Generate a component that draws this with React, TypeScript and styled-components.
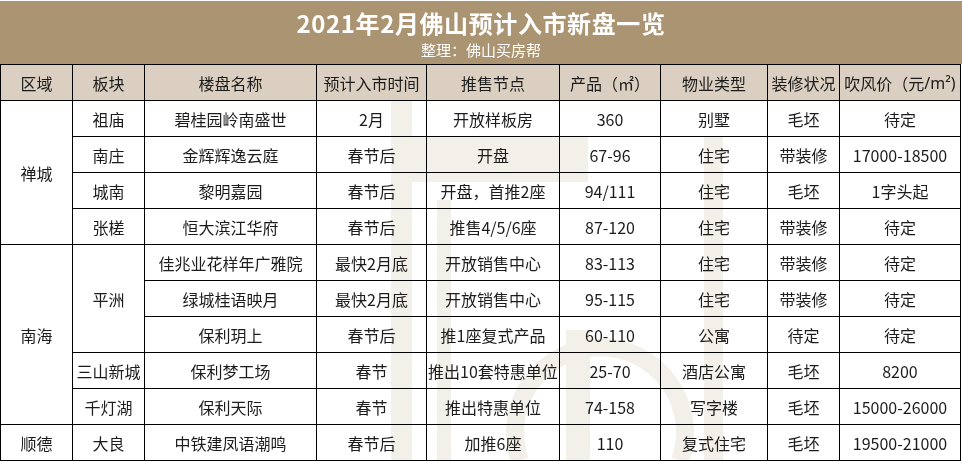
import React from "react";
import styled, { createGlobalStyle } from "styled-components";

const Global = createGlobalStyle`
  html, body { margin: 0; padding: 0; background: #ffffff; }
  body { font-family: "Noto Sans CJK SC", "Noto Sans", sans-serif; }
`;

const Page = styled.div`
  position: relative;
  width: 962px;
  height: 461px;
  overflow: hidden;
  background: #ffffff;
`;

const Banner = styled.header`
  margin-top: 1px;
  height: 63px;
  box-sizing: border-box;
  padding-top: 9px;
  background: #ab9471;
  color: #ffffff;
  display: flex;
  flex-direction: column;
  align-items: center;
`;

const Title = styled.h1`
  margin: 0;
  font-size: 24px;
  line-height: 26px;
  font-weight: 700;
  letter-spacing: 0.6px;
`;

const Subtitle = styled.div`
  margin-top: 5px;
  font-size: 15px;
  line-height: 17px;
`;

const Grid = styled.div`
  display: grid;
  width: 961px;
  box-sizing: border-box;
  padding: 1px;
  gap: 1px;
  background: #000000;
  grid-template-columns: 71px 71px 171px 109px 132px 100px 106px 71px 120px;
  grid-auto-rows: 35px;
`;

const Cell = styled.div<{ $head?: boolean; $span?: number }>`
  background: ${(p) => (p.$head ? "#dacfc0" : "#ffffff")};
  color: #1c1c1c;
  font-size: 16px;
  line-height: 20px;
  white-space: nowrap;
  display: flex;
  align-items: center;
  justify-content: center;
  overflow: hidden;
  grid-row: span ${(p) => p.$span ?? 1};
`;

const Latin = styled.span`
  font-family: "Noto Sans", "Liberation Sans", sans-serif;
`;

const Watermark = styled.svg`
  position: absolute;
  left: 0;
  top: 0;
  pointer-events: none;
  mix-blend-mode: multiply;
`;

const headers: React.ReactNode[] = [
  "区域",
  "板块",
  "楼盘名称",
  "预计入市时间",
  "推售节点",
  "产品（㎡）",
  "物业类型",
  "装修状况",
  <>
    吹风价（元<Latin>/m²)</Latin>
  </>,
];

type Row = {
  area?: [string, number];
  block?: [string, number];
  cells: string[];
};

const rows: Row[] = [
  { area: ["禅城", 4], block: ["祖庙", 1], cells: ["碧桂园岭南盛世", "2月", "开放样板房", "360", "别墅", "毛坯", "待定"] },
  { block: ["南庄", 1], cells: ["金辉辉逸云庭", "春节后", "开盘", "67-96", "住宅", "带装修", "17000-18500"] },
  { block: ["城南", 1], cells: ["黎明嘉园", "春节后", "开盘，首推2座", "94/111", "住宅", "毛坯", "1字头起"] },
  { block: ["张槎", 1], cells: ["恒大滨江华府", "春节后", "推售4/5/6座", "87-120", "住宅", "带装修", "待定"] },
  { area: ["南海", 5], block: ["平洲", 3], cells: ["佳兆业花样年广雅院", "最快2月底", "开放销售中心", "83-113", "住宅", "带装修", "待定"] },
  { cells: ["绿城桂语映月", "最快2月底", "开放销售中心", "95-115", "住宅", "带装修", "待定"] },
  { cells: ["保利玥上", "春节后", "推1座复式产品", "60-110", "公寓", "待定", "待定"] },
  { block: ["三山新城", 1], cells: ["保利梦工场", "春节", "推出10套特惠单位", "25-70", "酒店公寓", "毛坯", "8200"] },
  { block: ["千灯湖", 1], cells: ["保利天际", "春节", "推出特惠单位", "74-158", "写字楼", "毛坯", "15000-26000"] },
  { area: ["顺德", 1], block: ["大良", 1], cells: ["中铁建凤语潮鸣", "春节后", "加推6座", "110", "复式住宅", "毛坯", "19500-21000"] },
];

export default function App() {
  return (
    <>
      <Global />
      <Page>
        <Banner>
          <Title>2021年2月佛山预计入市新盘一览</Title>
          <Subtitle>整理：佛山买房帮</Subtitle>
        </Banner>
        <Grid>
          {headers.map((h, i) => (
            <Cell key={i} $head>
              {h}
            </Cell>
          ))}
          {rows.map((r, i) => (
            <React.Fragment key={i}>
              {r.area && <Cell $span={r.area[1]}>{r.area[0]}</Cell>}
              {r.block && <Cell $span={r.block[1]}>{r.block[0]}</Cell>}
              {r.cells.map((c, j) => (
                <Cell key={j}>{c}</Cell>
              ))}
            </React.Fragment>
          ))}
        </Grid>
        <Watermark width="962" height="461" viewBox="0 0 962 461">
          <g fill="#f3efe9">
            <rect x="391" y="101" width="21" height="360" />
            <rect x="412" y="137" width="176" height="45" />
            <rect x="437" y="200" width="14" height="261" />
            <rect x="704" y="137" width="19" height="324" />
            <rect x="566" y="330" width="24" height="131" />
          </g>
          <g fill="none" stroke="#f3efe9" strokeWidth="18">
            <path d="M 520 461 A 85 85 0 1 1 680 461" />
          </g>
        </Watermark>
      </Page>
    </>
  );
}
